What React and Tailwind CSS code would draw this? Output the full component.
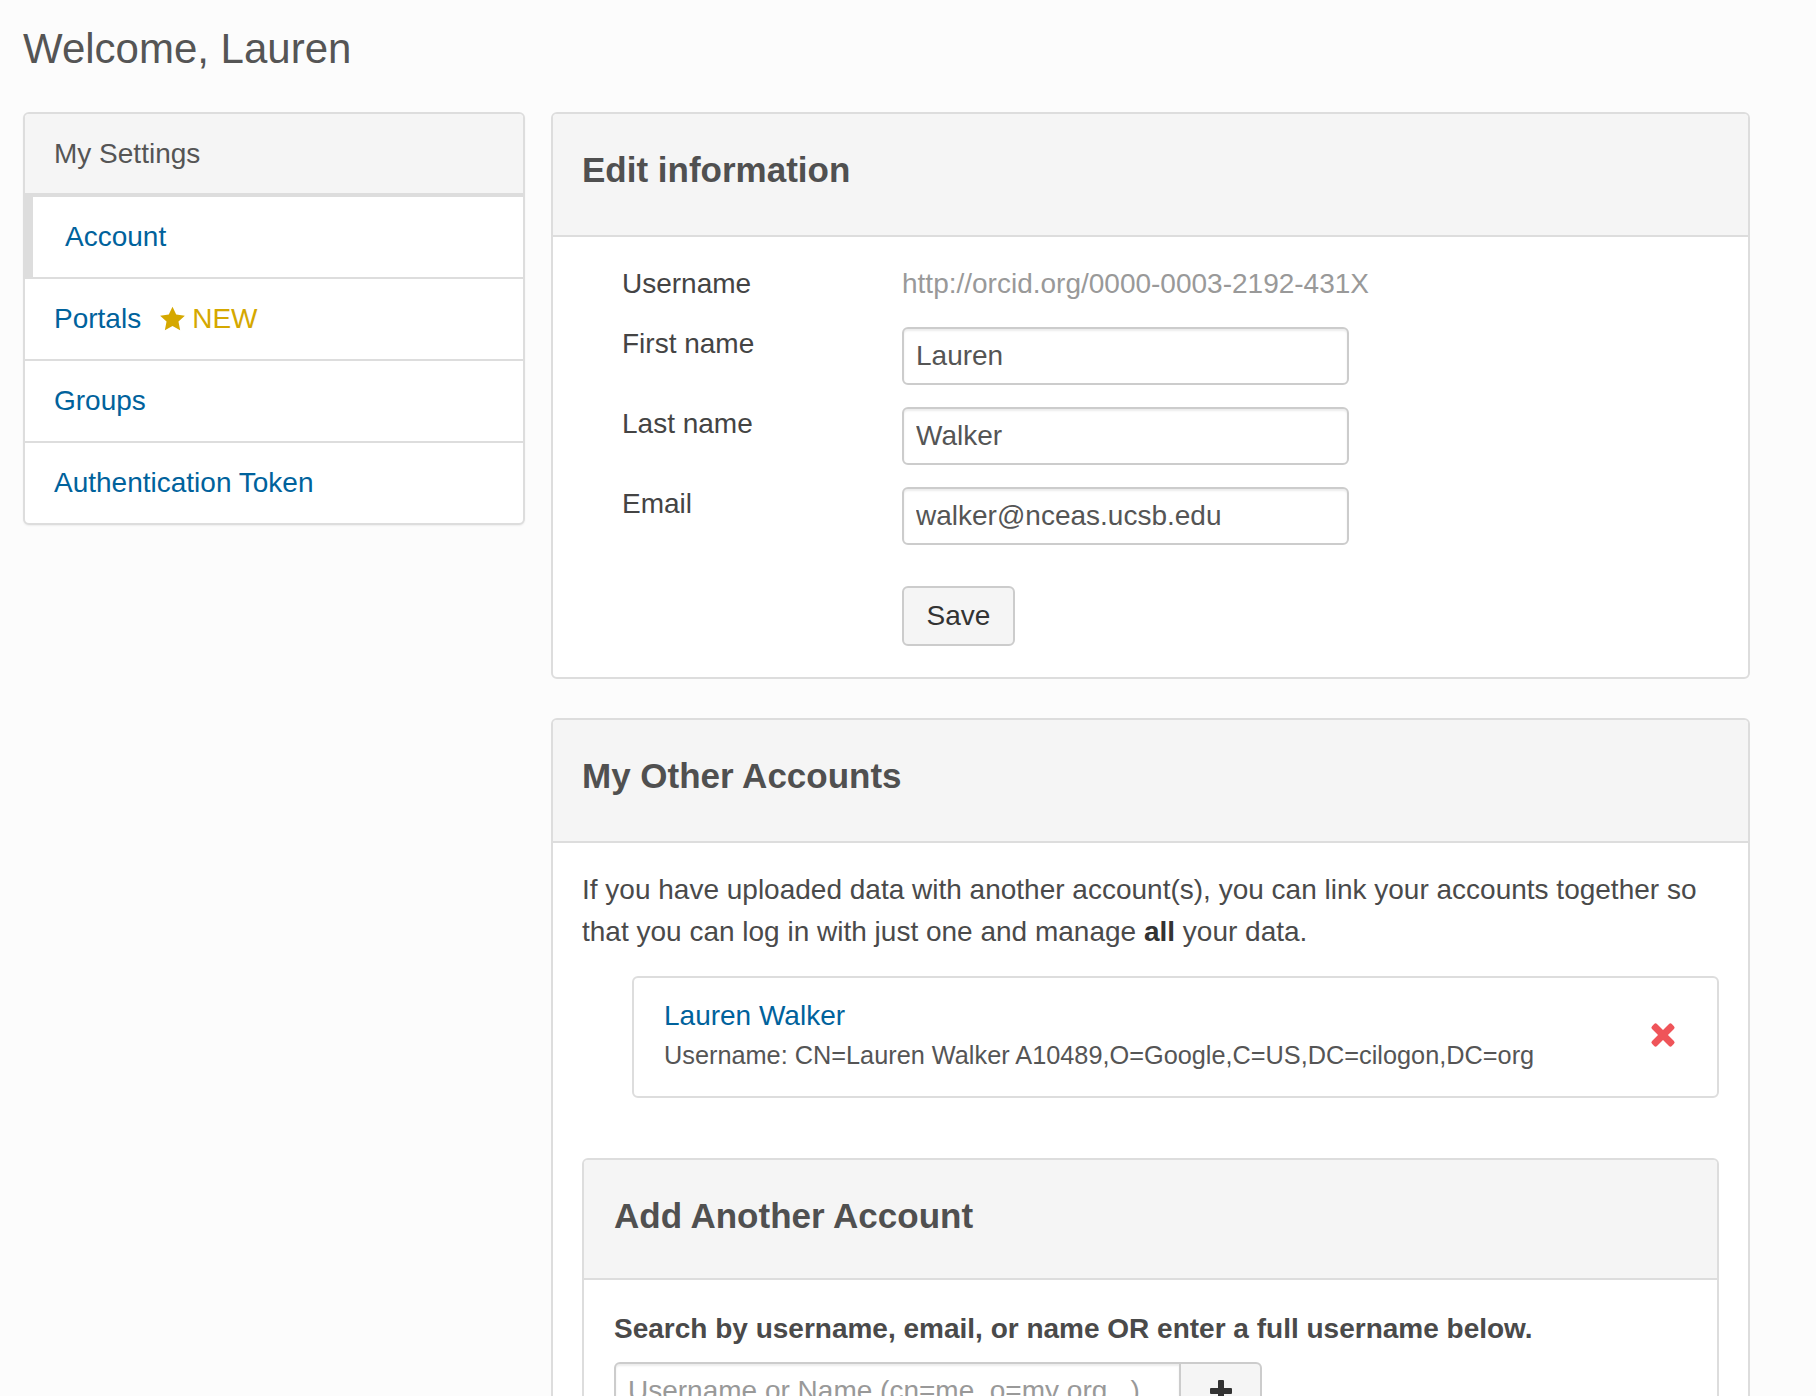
import React from 'react';

const Star = () => (
  <svg width="27" height="26" viewBox="0 0 24 23" className="shrink-0">
    <path d="M12 0.6l3.3 7 7.7 0.9-5.7 5.3 1.5 7.7L12 17.7l-6.8 3.8 1.5-7.7L1 8.5l7.7-0.9z" fill="#d5a800" />
  </svg>
);

const RemoveIcon = () => (
  <svg width="26" height="26" viewBox="0 0 26 26">
    <rect x="9.5" y="-1" width="7" height="28" rx="2" fill="#ef5459" transform="rotate(45 13 13)" />
    <rect x="9.5" y="-1" width="7" height="28" rx="2" fill="#ef5459" transform="rotate(-45 13 13)" />
  </svg>
);

const PlusIcon = () => (
  <svg width="22" height="22" viewBox="0 0 22 22">
    <rect x="8" y="0" width="6" height="22" rx="1" fill="#333" />
    <rect x="0" y="8" width="22" height="6" rx="1" fill="#333" />
  </svg>
);

const navItems = [
  { label: 'Account', active: true },
  { label: 'Portals', isNew: true },
  { label: 'Groups' },
  { label: 'Authentication Token' },
];

const Field = ({ label, value }) => (
  <>
    <div className="pt-[1px] leading-[32px] text-[#444]">{label}</div>
    <input
      readOnly
      value={value}
      className="w-[447px] h-[58px] border-2 border-[#ccc] rounded-[6px] px-[12px] text-[28px] text-[#555] bg-white shadow-[inset_0_2px_2px_rgba(0,0,0,0.075)] outline-none"
    />
  </>
);

const PanelHeader = ({ children }) => (
  <div className="bg-[#f5f5f5] border-b-2 border-[#ddd] px-[29px] pt-[36px] pb-[45px]">
    <h3 className="text-[35px] leading-[40px] font-bold text-[#505050]">{children}</h3>
  </div>
);

export default function App() {
  return (
    <div className="min-h-screen bg-[#fcfcfc] pl-[23px] pr-[66px] pb-[60px] font-['Liberation_Sans',Arial,sans-serif] text-[28px] text-[#444]">
      <h1 className="pt-[26px] text-[42px] leading-[46px] text-[#555]">Welcome, Lauren</h1>

      <div className="flex items-start gap-[26px] mt-[40px]">
        {/* sidebar */}
        <div className="w-[502px] shrink-0 bg-white border-2 border-[#ddd] rounded-[6px] overflow-hidden shadow-[0_1px_2px_rgba(0,0,0,0.06)]">
          <div className="h-[81px] bg-[#f5f5f5] border-b-2 border-[#ddd] flex items-center pl-[29px] text-[#555]">
            My Settings
          </div>
          {navItems.map((item) => (
            <div
              key={item.label}
              className={
                'h-[82px] flex items-center text-[#00629c] border-t-2 border-[#ddd] ' +
                (item.active ? 'border-l-8 border-l-[#ddd] pl-[32px]' : 'pl-[29px]')
              }
            >
              <span>{item.label}</span>
              {item.isNew && (
                <span className="flex items-center ml-[18px] gap-[6px] text-[#d5a800]">
                  <Star />
                  NEW
                </span>
              )}
            </div>
          ))}
        </div>

        {/* main */}
        <div className="flex-1 min-w-0">
          <div className="bg-white border-2 border-[#ddd] rounded-[6px] overflow-hidden">
            <PanelHeader>Edit information</PanelHeader>
            <div className="pt-[31px] pb-[31px] pl-[69px]">
              <div className="grid grid-cols-[280px_1fr] items-start gap-y-[22px]">
                <div className="leading-[32px] text-[#444] mb-[5px]">Username</div>
                <div className="leading-[32px] text-[#999] mb-[5px]">http://orcid.org/0000-0003-2192-431X</div>
                <Field label="First name" value="Lauren" />
                <Field label="Last name" value="Walker" />
                <Field label="Email" value="walker@nceas.ucsb.edu" />
                <div />
                <button className="mt-[19px] w-[113px] h-[60px] bg-[#f5f5f5] border-2 border-[#ccc] rounded-[6px] text-[28px] text-[#333]">
                  Save
                </button>
              </div>
            </div>
          </div>

          <div className="mt-[39px] bg-white border-2 border-[#ddd] rounded-[6px] overflow-hidden">
            <PanelHeader>My Other Accounts</PanelHeader>
            <div className="pt-[26px] px-[29px] pb-[40px]">
              <p className="leading-[42px] whitespace-nowrap text-[#4a4a4a]">
                If you have uploaded data with another account(s), you can link your accounts together so
                <br />
                that you can log in with just one and manage <b className="text-[#333]">all</b> your data.
              </p>

              <div className="mt-[23px] ml-[50px] border-2 border-[#ddd] rounded-[6px] bg-white pl-[30px] pr-[41px] pt-[21px] pb-[25px] flex items-center justify-between">
                <div>
                  <div className="leading-[34px] text-[#00629c]">Lauren Walker</div>
                  <div className="mt-[6px] leading-[32px] text-[25.3px] text-[#555]">
                    Username: CN=Lauren Walker A10489,O=Google,C=US,DC=cilogon,DC=org
                  </div>
                </div>
                <RemoveIcon />
              </div>

              <div className="mt-[60px] border-2 border-[#ddd] rounded-[6px] overflow-hidden">
                <div className="bg-[#f5f5f5] border-b-2 border-[#ddd] px-[30px] pt-[36px] pb-[42px]">
                  <h3 className="text-[35px] leading-[40px] font-bold text-[#505050]">Add Another Account</h3>
                </div>
                <div className="px-[30px] pt-[33px] pb-[40px]">
                  <div className="leading-[32px] font-bold text-[#4a4a4a]">
                    Search by username, email, or name OR enter a full username below.
                  </div>
                  <div className="mt-[17px] flex h-[57px]">
                    <input
                      readOnly
                      placeholder="Username or Name (cn=me, o=my org...)"
                      className="w-[567px] h-full border-2 border-[#ccc] rounded-l-[6px] px-[12px] text-[28px] text-[#555] placeholder:text-[#999] bg-white shadow-[inset_0_2px_2px_rgba(0,0,0,0.075)] outline-none"
                    />
                    <button className="w-[81px] h-full bg-[#f5f5f5] border-2 border-l-0 border-[#ccc] rounded-r-[6px] flex items-center justify-center">
                      <PlusIcon />
                    </button>
                  </div>
                </div>
              </div>
            </div>
          </div>
        </div>
      </div>
    </div>
  );
}
